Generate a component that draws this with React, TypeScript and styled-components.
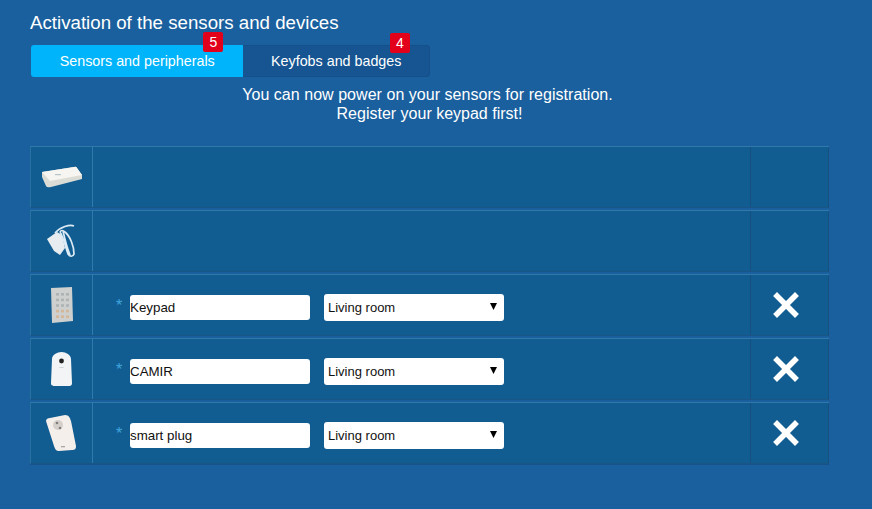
import React from 'react'
import styled, { createGlobalStyle } from 'styled-components'

const GlobalStyle = createGlobalStyle`
    html, body {
        margin: 0;
        padding: 0;
        background: #1a5f9e;
    }
    body {
        font-family: "Liberation Sans", Arial, sans-serif;
        color: #fff;
    }
`;

const Page = styled.div`
    width: 872px;
    height: 509px;
    padding: 12px 43px 0 30px;
    box-sizing: border-box;
    overflow: hidden;
`;

const Title = styled.h1`
    margin: 0;
    font-size: 18.7px;
    line-height: 21px;
    font-weight: normal;
`;

const Tabs = styled.div`
    display: flex;
    width: 399px;
    height: 32px;
    margin: 12px 0 0 1px;
    box-sizing: border-box;
    background: #165591;
    border: 1px solid #14508a;
    border-radius: 3px;
`;

const Tab = styled.div<{ $active?: boolean; $width: number }>`
    position: relative;
    display: flex;
    align-items: center;
    justify-content: center;
    width: ${(p) => p.$width}px;
    margin: ${(p) => (p.$active ? '-1px 0 -1px -1px' : '0')};
    font-size: 14.3px;
    border-radius: ${(p) => (p.$active ? '3px 0 0 3px' : '0')};
    background: ${(p) => (p.$active ? '#00b4fb' : 'transparent')};
`;

const Badge = styled.span<{ $right: number }>`
    position: absolute;
    top: -13px;
    right: ${(p) => p.$right}px;
    width: 20px;
    height: 20px;
    line-height: 20px;
    text-align: center;
    font-size: 14px;
    color: #fff;
    background: #e2001a;
    border-radius: 2px;
`;

const Notice = styled.p`
    margin: 9px 0 0;
    text-align: center;
    font-size: 16px;
    line-height: 18.5px;
`;

const NoticeLead = styled.span`
    padding-right: 4px;
    letter-spacing: 0.04px;
`;

const Table = styled.div`
    display: flex;
    flex-direction: column;
    gap: 2px;
    margin-top: 23px;
    width: 799px;
    box-shadow: 0 1px 0 #17528a;
`;

const Row = styled.div`
    display: grid;
    grid-template-columns: 62px 658px 78px;
    height: 62px;
    box-sizing: border-box;
    background: #115d92;
    border-top: 1px solid #2f79ab;
    border-bottom: 1px solid #1a5585;
    border-left: 1px solid #29729f;
`;

const Thumb = styled.div`
    display: flex;
    align-items: center;
    justify-content: center;
    border-right: 1px solid #2f79ab;
`;

const Fields = styled.div`
    display: flex;
    align-items: center;
    padding: 4px 0 0 37px;
    border-right: 1px solid #15507f;
`;

const Star = styled.span`
    width: 0;
    margin: -3px 0 0 -14px;
    padding-right: 14px;
    font-size: 16px;
    color: #3fa6de;
`;

const NameInput = styled.input`
    width: 180px;
    height: 25px;
    padding: 0;
    box-sizing: border-box;
    border: none;
    border-radius: 3px;
    font-family: "Liberation Sans", Arial, sans-serif;
    font-size: 13.33px;
    color: #111;
    background: #fff;
`;

const SelectWrap = styled.div`
    position: relative;
    margin-left: 14px;
    width: 180px;
    height: 27px;
`;

const RoomSelect = styled.select`
    appearance: none;
    display: block;
    width: 100%;
    height: 100%;
    padding: 0 0 0 4px;
    box-sizing: border-box;
    border: none;
    border-radius: 3px;
    font-family: "Liberation Sans", Arial, sans-serif;
    font-size: 13px;
    color: #111;
    background: #fff;
`;

const Caret = styled.svg`
    position: absolute;
    top: 9px;
    right: 7px;
    width: 7px;
    height: 7px;
    pointer-events: none;
`;

const Action = styled.div`
    display: flex;
    align-items: center;
    justify-content: center;
    padding-right: 8px;
    border-right: 1px solid #15507f;
`;

const HubIcon = () => (
    <svg width="42" height="22" viewBox="0 0 42 22">
        <path d="M1 6 L33 1 Q35 0 36 2 L41 9 L41 13 L10 21 Q6 22 5 20 L1 11 Z" fill="#dcdcd6" />
        <path d="M1 6 L33 1 Q35 0 36 2 L41 9 L9 15 Z" fill="#f6f5f1" />
        <rect x="14" y="8" width="6" height="1.2" fill="#b9c4c8" />
    </svg>
);

const AdapterIcon = () => (
    <svg width="32" height="34" viewBox="0 0 32 34" fill="none">
        <path d="M1 15 L11 8 L16 11 L19 24 L14 31 L8 27 Z" fill="#e6ecf0" />
        <path d="M9 9 C14 3 24 0 28 2 M14 8 C17 12 19 22 22 30 C24 33 27 33 28 30 C28 22 24 12 19 8 C17 6 15 6 14 8 M17 7 C19 16 21 24 24 31" stroke="#dcebf4" strokeWidth="1.7" />
    </svg>
);

const KeypadIcon = () => {
    const keys: React.ReactElement[] = [];
    for (let r = 0; r < 5; r++) {
        for (let c = 0; c < 3; c++) {
            keys.push(<rect key={`${r}-${c}`} x={5 + c * 5} y={6 + r * 5.6} width="3" height="2.6" fill={r > 2 ? '#d3b798' : '#aeb3b3'} />);
        }
    }
    return (
        <svg width="22" height="36" viewBox="0 0 22 36">
            <path d="M0 1 L21 0 L22 34 L1 36 Z" fill="#cdd0cf" />
            {keys}
        </svg>
    );
};

const CameraIcon = () => (
    <svg width="21" height="35" viewBox="0 0 21 35">
        <path d="M1 7 C1 3 6 0 10.5 0 C15 0 20 3 20 7 L21 31 C21 34 19 34 17 34 L4 34 C2 34 0 34 0 31 Z" fill="#f2f4f6" />
        <circle cx="10.5" cy="9" r="2.4" fill="#222" />
        <rect x="8.5" y="15" width="4" height="1" fill="#cfd5d9" />
    </svg>
);

const PlugIcon = () => (
    <svg width="31" height="36" viewBox="0 0 31 36">
        <path d="M0 6 C0 4 2 3 4 3 L19 0 C23 0 24 3 25 6 L30 31 C30 34 29 35 26 35 L13 36 C10 36 9 34 8 31 Z" fill="#f5efeb" />
        <circle cx="12" cy="10" r="5" fill="#d5cfcb" />
        <circle cx="11" cy="8" r="1.3" fill="#807e7c" />
        <circle cx="14" cy="13" r="1.3" fill="#807e7c" />
        <rect x="15" y="31" width="4" height="1.3" fill="#a8a6a4" />
    </svg>
);

const CloseIcon = () => (
    <svg width="26" height="26" viewBox="0 0 26 26">
        <path d="M4 4 L22 22 M22 4 L4 22" stroke="#fff" strokeWidth="5.5" strokeLinecap="square" />
    </svg>
);

const devices = [
    { icon: <HubIcon /> },
    { icon: <AdapterIcon /> },
    { icon: <KeypadIcon />, name: 'Keypad' },
    { icon: <CameraIcon />, name: 'CAMIR' },
    { icon: <PlugIcon />, name: 'smart plug' },
];

export default function App() {
    return (
        <Page>
            <GlobalStyle />
            <Title>Activation of the sensors and devices</Title>
            <Tabs>
                <Tab $active $width={213}>
                    Sensors and peripherals
                    <Badge $right={20}>5</Badge>
                </Tab>
                <Tab $width={186}>
                    Keyfobs and badges
                    <Badge $right={19}>4</Badge>
                </Tab>
            </Tabs>
            <Notice>
                <NoticeLead>You can now power on your sensors for registration.</NoticeLead>
                <br />
                Register your keypad first!
            </Notice>
            <Table>
                {devices.map((device, i) => (
                    <Row key={i}>
                        <Thumb>{device.icon}</Thumb>
                        <Fields>
                            {device.name && (
                                <>
                                    <Star>*</Star>
                                    <NameInput defaultValue={device.name} />
                                    <SelectWrap>
                                        <RoomSelect defaultValue="Living room">
                                            <option>Living room</option>
                                        </RoomSelect>
                                        <Caret viewBox="0 0 7 7">
                                            <path d="M0 0 H7 L3.5 7 Z" fill="#000" />
                                        </Caret>
                                    </SelectWrap>
                                </>
                            )}
                        </Fields>
                        <Action>{device.name && <CloseIcon />}</Action>
                    </Row>
                ))}
            </Table>
        </Page>
    );
}
